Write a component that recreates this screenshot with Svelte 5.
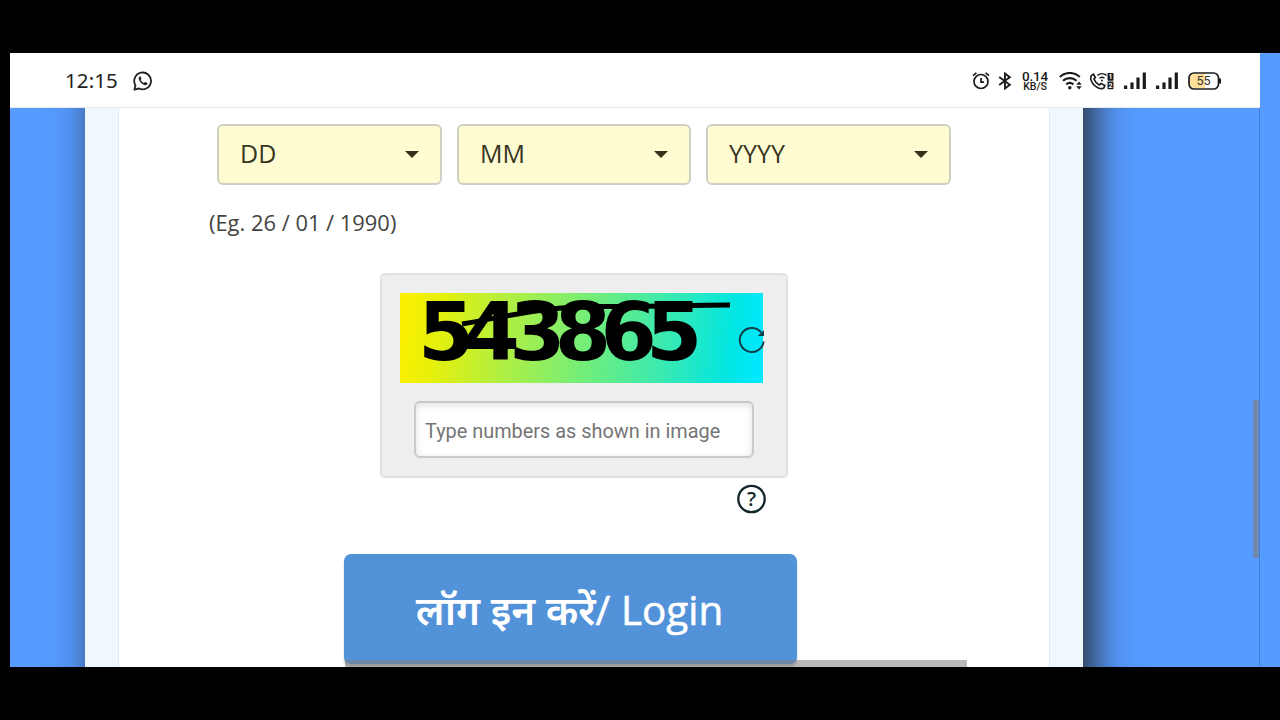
<script lang="ts">
	const dateFields = [
		{ label: 'DD', cls: 'day' },
		{ label: 'MM', cls: 'month' },
		{ label: 'YYYY', cls: 'year' }
	];

	const captcha = '543865';
	const signals = [1, 2];
</script>

<div class="device">
	<div class="screen">
		<header class="status">
			<span class="clock">12:15</span>
			<svg class="whatsapp" viewBox="0 0 20 20" width="20" height="20">
				<path d="M1.4 18.6l1-4.4A8.4 8.4 0 1 1 6 17.5z" fill="none" stroke="#222" stroke-width="1.8" stroke-linejoin="round" />
				<path d="M6.9 5.4c-1 .5-1.5 1.5-1.1 2.8.8 2.8 3.3 5.2 6 6 1.2.3 2.3-.3 2.7-1.4.1-.4.1-.7-.3-.9l-1.7-.8c-.3-.2-.6-.1-.8.2l-.7.8c-1.5-.6-2.6-1.6-3.3-3l.6-.8c.2-.2.2-.5.1-.7l-.8-1.9c-.1-.3-.4-.4-.7-.3z" fill="#222" />
			</svg>
			<div class="indicators">
				<svg viewBox="0 0 18 20" width="18" height="20">
					<circle cx="9" cy="10.5" r="7" fill="none" stroke="#1c1c1c" stroke-width="1.7" />
					<path d="M9 7v4.2h3" fill="none" stroke="#1c1c1c" stroke-width="1.7" />
					<path d="M1 4.6l3.4-2.8M17 4.6l-3.4-2.8" stroke="#1c1c1c" stroke-width="1.7" />
				</svg>
				<svg class="bluetooth" viewBox="0 0 14 18" width="14" height="18">
					<path d="M1.2 5l10.6 7.7L7 16.5v-15l4.8 3.8L1.2 13" fill="none" stroke="#1c1c1c" stroke-width="1.9" />
				</svg>
				<div class="speed">
					<span class="rate">0.14</span>
					<span class="unit">KB/S</span>
				</div>
				<svg class="wifi" viewBox="0 0 24 18" width="24" height="18">
					<path d="M.8 5a14.5 14.500 0 0 1 20 0M4 8.800a10 10 0 0 1 13.600 0M7.200 12.300a5.700 5.700 0 0 1 7.200 0" fill="none" stroke="#1c1c1c" stroke-width="2.2" />
					<circle cx="10.8" cy="15.8" r="1.7" fill="#1c1c1c" />
					<path d="M17.3 12.7l2.700-3.300 2.700 3.300zM17.300 14.300l2.700 3.300 2.700-3.300z" fill="#1c1c1c" />
				</svg>
				<svg class="call" viewBox="0 0 24 18" width="24" height="18">
					<path d="M1.600 3.400L3.500 2.200l1.800 3.300L4 7c1 2.700 2.700 4.600 5.200 5.900l1.900-1.500 3.700 1.900-.9 2.600c-1.400 1.100-3.700.9-6-.2C4.400 13.900 1.700 11 .9 7.400.6 5.600.600 4.300 1.600 3.400z" fill="none" stroke="#1c1c1c" stroke-width="1.700" />
					<path d="M7.400 3.400a7.500 7.500 0 0 1 9.200 0M9.500 6.200a4.200 4.200 0 0 1 5 0" fill="none" stroke="#1c1c1c" stroke-width="1.400" />
					<circle cx="12" cy="8.400" r="1" fill="#1c1c1c" />
					<rect x="17.500" y="1" width="6" height="7.700" rx=".6" fill="#1c1c1c" />
					<rect x="17.500" y="9.500" width="6" height="7.700" rx=".6" fill="#1c1c1c" />
					<text x="20.500" y="7.400" class="sim">1</text>
					<text x="20.500" y="15.900" class="sim">2</text>
				</svg>
				{#each signals as sim (sim)}
					<svg class="signal" viewBox="0 0 22 18" width="22" height="18">
						<path d="M1.600 13.500v3.500M8 10.500v6.500M14 5.500v11.500M20.300 .5v16.500" stroke="#1c1c1c" stroke-width="3.200" />
					</svg>
				{/each}
				<svg class="battery" viewBox="0 0 34 18" width="34" height="18">
					<rect x="1" y="1" width="29.500" height="16" rx="5" fill="#fff" />
					<path d="M17 2H6a4 4 0 0 0-4 4v6a4 4 0 0 0 4 4h11z" fill="#ffdf9a" />
					<rect x="1" y="1" width="29.500" height="16" rx="5" fill="none" stroke="#1c1c1c" stroke-width="1.700" />
					<path d="M32 6.500v5" stroke="#1c1c1c" stroke-width="2" />
					<text x="15.500" y="13.300" class="level">55</text>
				</svg>
			</div>
		</header>

		<main class="page">
			<div class="sheet">
				<form class="form" onsubmit={(e) => e.preventDefault()}>
					<div class="dates">
						{#each dateFields as field (field.cls)}
							<div class="select {field.cls}">
								<span>{field.label}</span>
								<i class="caret"></i>
							</div>
						{/each}
					</div>
					<p class="hint">(Eg. 26 / 01 / 1990)</p>

					<div class="captcha">
						<svg class="image" viewBox="0 0 363 90" width="363" height="90">
							<defs>
								<linearGradient id="captcha-bg" gradientUnits="userSpaceOnUse" x1="2" y1="20" x2="360" y2="64">
									<stop offset="0" stop-color="#fcf000" />
									<stop offset=".1" stop-color="#e6f00b" />
									<stop offset=".3" stop-color="#aeef44" />
									<stop offset=".52" stop-color="#72ee7a" />
									<stop offset=".75" stop-color="#35e9b5" />
									<stop offset=".92" stop-color="#00e6e3" />
									<stop offset="1" stop-color="#00e8ff" />
								</linearGradient>
							</defs>
							<rect width="363" height="90" fill="url(#captcha-bg)" />
							<text x="18" y="66.5" class="digits">{captcha}</text>
							<path d="M62 31C115 22 145 13 205 13.5S280 12 330 12" fill="none" stroke="#000" stroke-width="5" />
						</svg>
						<svg class="refresh" viewBox="0 0 28 28" width="28" height="28">
							<path d="M25.700 15.500A12 12 0 1 1 23.200 6.600" fill="none" stroke="#123c46" stroke-width="2" />
							<path d="M26 4.200v5.800h-6.200z" fill="#123c46" />
						</svg>
						<input type="text" placeholder="Type numbers as shown in image" />
					</div>

					<svg class="help" viewBox="0 0 30 30" width="30" height="30">
						<circle cx="15.500" cy="15" r="13.200" fill="none" stroke="#14282c" stroke-width="2.300" />
						<text x="15.500" y="22">?</text>
					</svg>

					<button class="login" type="submit"><span class="hindi">लॉग इन करें</span><span class="latin">/ Login</span></button>
				</form>
			</div>
			<div class="scroll-y"></div>
			<div class="scroll-x"></div>
		</main>
	</div>
	<div class="edge"></div>
</div>

<style>
	:global(body) {
		background: #000;
		overflow: hidden;
	}

	.device {
		box-sizing: border-box;
		width: 1280px;
		height: 720px;
		padding: 53px 0 53px 10px;
		display: flex;
		background: #000;
		font-family: 'Open Sans', 'Noto Sans', sans-serif;
	}

	.screen {
		width: 1250px;
		display: flex;
		flex-direction: column;
		background: #fff;
	}

	.edge {
		flex: 1;
		background: #569bff;
	}

	.status {
		box-sizing: border-box;
		height: 55px;
		padding: 1px 38px 0 55px;
		display: flex;
		align-items: center;
		border-bottom: 1px solid #e4ebee;
	}

	.clock {
		width: 53px;
		margin-top: -2px;
		font-family: 'Noto Sans', sans-serif;
		font-size: 20.5px;
		letter-spacing: 0.1px;
		color: #222;
		white-space: nowrap;
	}

	.whatsapp {
		margin-left: 15px;
	}

	.indicators {
		margin-left: auto;
		display: flex;
		align-items: center;
	}

	.bluetooth {
		margin-left: 8px;
	}

	.speed {
		width: 26px;
		margin-left: 10px;
		display: flex;
		flex-direction: column;
		align-items: center;
		font-family: Roboto, sans-serif;
		font-weight: 500;
		color: #1c1c1c;
	}

	.rate {
		font-size: 13.5px;
		line-height: 12px;
		letter-spacing: -0.2px;
	}

	.unit {
		font-size: 10.5px;
		line-height: 10px;
	}

	.wifi {
		margin-left: 11px;
	}

	.call {
		margin-left: 7px;
	}

	.sim {
		fill: #fff;
		font: bold 7px Roboto, sans-serif;
		text-anchor: middle;
	}

	.signal {
		margin-left: 10px;
	}

	.battery {
		margin-left: 10px;
	}

	.level {
		fill: #333;
		font: 12.5px Roboto, sans-serif;
		text-anchor: middle;
	}

	.page {
		position: relative;
		flex: 1;
		min-height: 0;
		padding: 0 176px 0 75px;
		display: flex;
		overflow: hidden;
		background: #569bff;
		border-right: 1px solid #3d80df;
	}

	/* runs past both ends of the viewport so the shadow stays even */
	.sheet {
		box-sizing: border-box;
		width: 998px;
		margin: -60px 0;
		padding: 0 33px;
		background: #eff8ff;
		box-shadow: 10px 0 36px rgba(38, 38, 38, 0.95);
	}

	.form {
		box-sizing: border-box;
		height: 100%;
		padding: 76px 0 0 98px;
		display: flex;
		flex-direction: column;
		align-items: flex-start;
		background: #fff;
		border: solid #e3e9ed;
		border-width: 0 1px;
	}

	.dates {
		display: flex;
		gap: 15px;
	}

	.select {
		box-sizing: border-box;
		height: 61px;
		padding: 0 21px;
		display: flex;
		align-items: center;
		justify-content: space-between;
		border: 2px solid #d0cfc6;
		border-radius: 6px;
		background: #fffcd2;
		color: #39361f;
		font-size: 25px;
	}

	.select span {
		margin-top: -4px;
	}

	.day {
		width: 225px;
	}

	.month {
		width: 234px;
	}

	.year {
		width: 245px;
	}

	.caret {
		border: solid transparent;
		border-width: 7px 7px 0;
		border-top-color: #39301c;
	}

	.hint {
		margin: 23px 0 0 -8px;
		font-size: 21.9px;
		line-height: 30px;
		color: #444;
	}

	.captcha {
		box-sizing: border-box;
		position: relative;
		width: 408px;
		height: 205px;
		margin: 35px 0 0 163px;
		padding: 18px;
		display: flex;
		flex-direction: column;
		align-items: flex-start;
		background: #eee;
		border: 2px solid #e0e0e0;
		border-radius: 5px;
	}

	.image {
		display: block;
	}

	.digits {
		font: bold 81px 'DejaVu Sans', sans-serif;
		letter-spacing: -10.75px;
		fill: #000;
	}

	.refresh {
		position: absolute;
		left: 356px;
		top: 51px;
	}

	.captcha input {
		box-sizing: border-box;
		width: 340px;
		height: 57px;
		margin: 18px 0 0 14px;
		padding: 3px 8px 0 9px;
		border: 2px solid #c8cacc;
		border-radius: 6px;
		background: #fff;
		box-shadow: inset 0 2px 7px rgba(0, 0, 0, 0.13);
		font-family: Roboto, sans-serif;
		font-size: 19.9px;
	}

	.captcha input::placeholder {
		color: #757575;
	}

	.help {
		margin: 6px 0 0 519px;
	}

	.help text {
		fill: #14282c;
		font: 600 20px 'Open Sans', sans-serif;
		text-anchor: middle;
	}

	.login {
		flex: none;
		box-sizing: border-box;
		width: 453px;
		height: 110px;
		margin: 40px 0 0 127px;
		padding: 0 2px 0 0;
		border: 0;
		border-radius: 7px;
		background: #5292d9;
		box-shadow: 0 3px 2px rgba(0, 0, 0, 0.25);
		color: #fff;
		font-family: 'Open Sans', 'Noto Sans', 'Noto Sans Devanagari', sans-serif;
		font-size: 40.4px;
		white-space: nowrap;
	}

	.hindi {
		font-weight: 600;
	}

	.latin {
		-webkit-text-stroke: 0.6px #fff;
	}

	.scroll-y {
		position: absolute;
		right: 0;
		top: 292px;
		width: 6px;
		height: 158px;
		background: rgba(128, 128, 128, 0.65);
	}

	.scroll-x {
		position: absolute;
		left: 335px;
		bottom: 0;
		width: 622px;
		height: 7px;
		background: rgba(128, 128, 128, 0.55);
	}
</style>
